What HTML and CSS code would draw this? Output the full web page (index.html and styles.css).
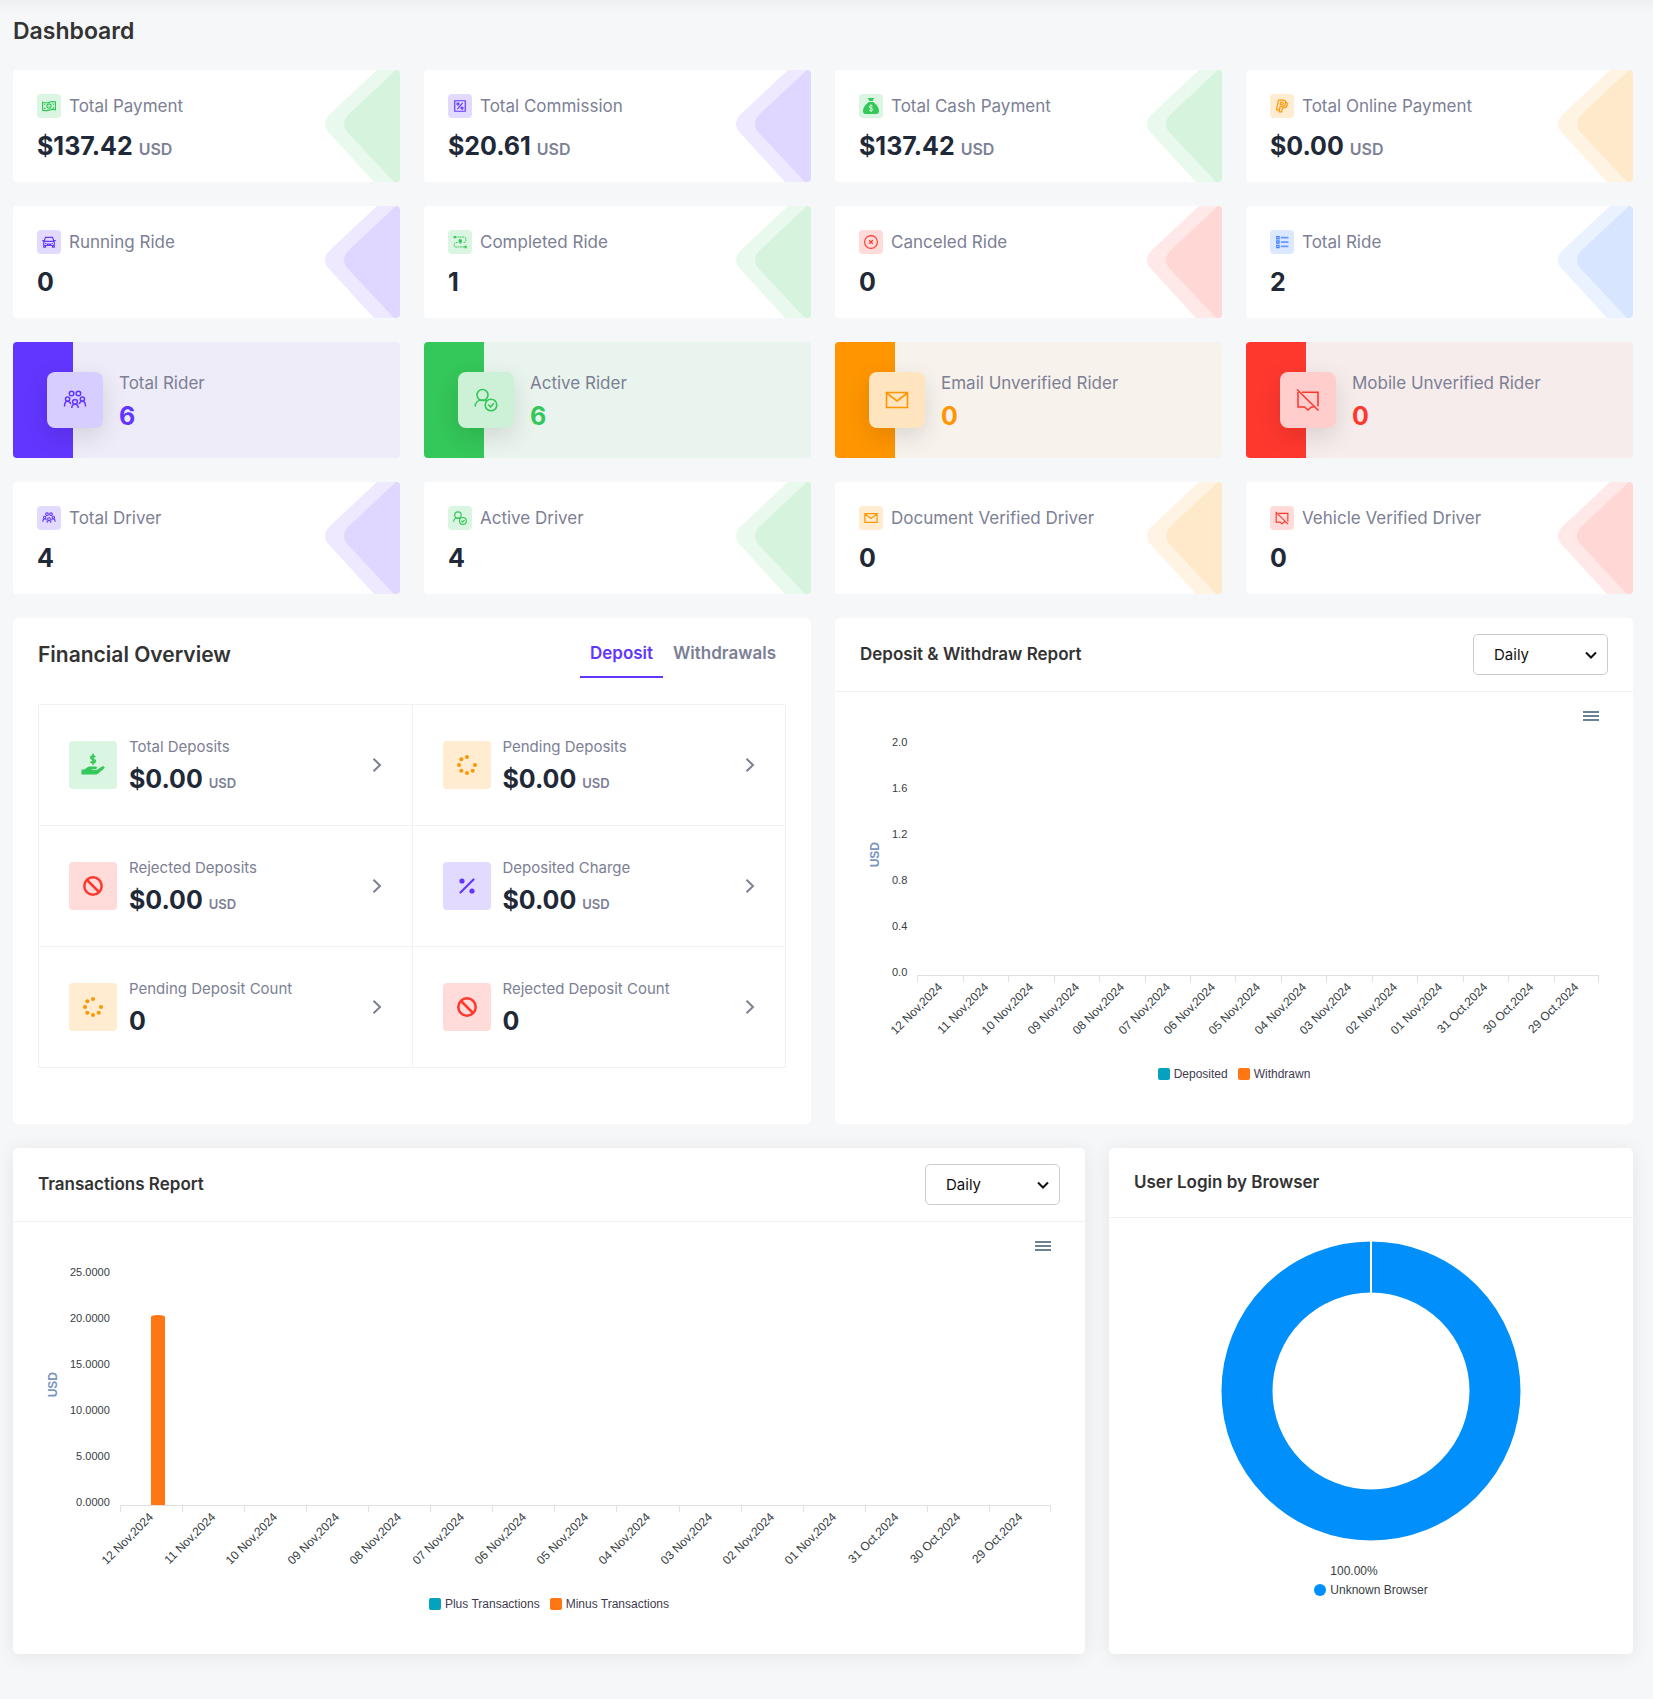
FILE: index.html
```html
<!DOCTYPE html>
<html lang="en">
<head>
<meta charset="utf-8">
<meta name="viewport" content="width=device-width, initial-scale=1">
<title>Dashboard</title>
<link rel="stylesheet" href="styles.css">
</head>
<body>
<svg class="sprite" aria-hidden="true">
  <symbol id="i-wedge" viewBox="0 0 75 112"><path opacity=".11" d="M52 0 6 43Q-6 54 6 65L49 112H75V0Z"/><path opacity=".1" d="M71 0 25 43Q13 54 25 65L69 112H75V0Z"/></symbol>
  <symbol id="i-cash" viewBox="0 0 24 24"><g fill="none" stroke="currentColor" stroke-width="2"><path d="M1 5.500c4 1.600 7 1.200 11 0s7-1.600 11-.5v13.500c-4-1.200-7-.7-11 .5s-7 1.200-11 0z"/><circle cx="12" cy="12" r="3.600"/></g><path fill="currentColor" d="M3.500 8h3.500L3.500 11zM17 7.500h3.500V11zM3.500 13.500 7 17H3.500zM20.500 13v3.500H17z"/><circle cx="12" cy="12" r="1" fill="currentColor"/></symbol>
  <symbol id="i-percent-box" viewBox="0 0 24 24"><g fill="none" stroke="currentColor" stroke-width="2"><path d="M3 3h18v18H3z"/><circle cx="8.500" cy="8.500" r="1.800"/><circle cx="15.500" cy="15.500" r="1.800"/><path d="M7.500 17.500l9-11"/></g></symbol>
  <symbol id="i-bag" viewBox="0 0 24 24"><path fill="currentColor" d="M7 0h10l-2.600 4.500H9.600zM8.500 6h7C20 9.500 24 14 24 20c0 2.500-1.500 4-4 4H4c-2.500 0-4-1.500-4-4C0 14 4 9.500 8.500 6z"/><path fill="none" stroke="#dbf5e2" stroke-width="1.500" d="M14.600 12.600c-.6-1-1.500-1.200-2.600-1.200-1.500 0-2.600.7-2.600 1.900 0 2.700 5.400 1.200 5.400 3.900 0 1.200-1.200 2-2.800 2-1.300 0-2.300-.4-2.800-1.400M12 9.500v11.500"/></symbol>
  <symbol id="i-paypal" viewBox="0 0 24 24"><g fill="none" stroke="currentColor" stroke-width="2" stroke-linejoin="round"><path d="M6 2h7.500c3.500 0 5.300 2 4.700 5-.6 3.600-3 5.500-6.700 5.500H8.800L7.600 18.500H2.500z"/><path d="M18.500 5c2.300 1 3 2.900 2.500 5.200-.7 3.500-3 5-6.500 5h-1.800L11.500 22H7l.8-3.500"/><path d="M9.500 5.500h3c1.300 0 2 .6 1.700 1.800-.3 1.500-1.300 2-2.700 2H8.700z"/></g></symbol>
  <symbol id="i-car" viewBox="0 0 24 24"><g fill="none" stroke="currentColor" stroke-width="2"><path d="M3 20V12l3-8h12l3 8v8M3 11h18M3 18h18M.5 9.500H4M20 9.500h3.500M3 17v4h3v-3M21 17v4h-3v-3"/><path d="M8.500 18l1-2.500h5l1 2.500"/></g><circle cx="6.500" cy="14.500" r="1.200" fill="currentColor"/><circle cx="17.500" cy="14.500" r="1.200" fill="currentColor"/></symbol>
  <symbol id="i-route" viewBox="0 0 24 24"><path fill="none" stroke="currentColor" stroke-width="1.600" stroke-dasharray="3 1" d="M4 3.500h15q3 0 3 3V10q0 3-3 3h-2M8 13H5q-3 0-3 3v1.500q0 3 3 3h15"/><path fill="currentColor" d="M1 1.500h4v4H1zM19.500 18.500h4v4h-4zM12.500 15.500C10.500 13 9.500 11.500 9.500 10a3 3 0 0 1 6 0c0 1.500-1 3-3 5.500z"/></symbol>
  <symbol id="i-x-circle" viewBox="0 0 24 24"><g fill="none" stroke="currentColor"><circle cx="12" cy="12" r="11" stroke-width="1.900"/><path stroke-width="2.200" d="M9 9l6 6M15 9l-6 6"/></g></symbol>
  <symbol id="i-list" viewBox="0 0 24 24"><g fill="none" stroke="currentColor"><path stroke-width="2" d="M3 2.500h4v4H3zM3 10h4v4H3zM3 17.500h4v4H3z"/><path stroke-width="3" opacity=".75" d="M10 4.500h13M10 12h13M10 19.500h13"/></g></symbol>
  <symbol id="i-users" viewBox="-1 0 26 26"><g fill="none" stroke="currentColor"><circle cx="8.300" cy="6" r="2.500"/><circle cx="15.700" cy="6" r="2.500"/><circle cx="4" cy="12" r="2.300"/><circle cx="20" cy="12" r="2.300"/><circle cx="12" cy="15" r="2.600"/><path d="M.6 20c0-3.400 1.400-5.700 3.400-5.700 1.600 0 2.900 1.200 3.400 3.200M23.400 20c0-3.400-1.400-5.700-3.400-5.700-1.600 0-2.900 1.200-3.400 3.200M8.500 21.800c0-2.700 1.400-4.200 3.500-4.200s3.500 1.500 3.500 4.200"/></g></symbol>
  <symbol id="i-user-check" viewBox="0 0 24 24"><g fill="none" stroke="currentColor"><circle cx="8.500" cy="7" r="5.500"/><path d="M1.200 18.500c0-4 3-6.500 6.800-6.500 2 0 3.500.5 4.700 1.400"/><circle cx="17" cy="17" r="5.800"/><path d="M14.300 16.500l2.300 2.500 3.200-3.800"/></g></symbol>
  <symbol id="i-mail" viewBox="0 0 24 24"><path fill="none" stroke="currentColor" d="M1.500 4.500h21v15h-21zM1.500 5 12 13 22.500 5"/></symbol>
  <symbol id="i-comment-slash" viewBox="0 0 24 24"><path fill="none" stroke="currentColor" d="M1 1.500 22.500 22.500M6 4.200h16v14M2 4v15h6.500L12 22l3.300-3h2.500"/></symbol>
  <symbol id="i-hand-dollar" viewBox="0 0 24 24"><path fill="currentColor" d="M.5 16.500h3l2.600-2.100c.9-.7 1.700-.9 2.700-.9h6c1.500 0 1.500 2.200 0 2.400h-4v.8h5.300L21 13.600c1.800-1.200 3.500.6 2.100 2l-5.600 4.700c-1 .8-1.800 1.200-3 1.200H.5z"/><path fill="none" stroke="currentColor" stroke-width="1.700" d="M14.200 4.200c-.5-.8-1.200-1-2.200-1-1.300 0-2.200.6-2.200 1.500 0 2.300 4.600 1 4.600 3.400 0 1-1 1.600-2.400 1.600-1.200 0-2-.4-2.400-1.200M12 .8v11"/></symbol>
  <symbol id="i-spinner" viewBox="0 0 20 20"><g fill="currentColor"><circle cx="10" cy="2" r="2"/><circle cx="4.300" cy="4.300" r="2"/><circle cx="2" cy="10" r="2"/><circle cx="4.300" cy="15.700" r="2"/><circle cx="10" cy="18" r="2"/><circle cx="15.700" cy="15.700" r="2"/><circle cx="18" cy="10" r="2"/></g></symbol>
  <symbol id="i-ban" viewBox="0 0 20 20"><g fill="none" stroke="currentColor" stroke-width="2.500"><circle cx="10" cy="10" r="8.700"/><path d="M4 4l12 12"/></g></symbol>
  <symbol id="i-percent" viewBox="0 0 20 20"><g fill="currentColor"><circle cx="5" cy="5" r="2.600"/><circle cx="15" cy="15" r="2.600"/></g><path stroke="currentColor" stroke-width="2.200" stroke-linecap="round" d="M3.500 16.500l13-13"/></symbol>
  <symbol id="i-chevron" viewBox="0 0 10 14"><path fill="none" stroke="currentColor" stroke-width="2" d="M1.500 .8 8 7l-6.500 6.200"/></symbol>
  <symbol id="i-menu" viewBox="0 0 16 12"><path fill="none" stroke="currentColor" stroke-width="2" d="M0 2h16M0 6h16M0 10h16"/></symbol>
</svg>

<main class="page">
  <h1 class="page-title">Dashboard</h1>

  <div class="grid">
    <article class="stat green"><div class="stat-head"><span class="badge"><svg><use href="#i-cash"/></svg></span><h2 class="label">Total Payment</h2></div><p class="value">$137.42 <small>USD</small></p><svg class="wedge"><use href="#i-wedge"/></svg></article>
    <article class="stat purple"><div class="stat-head"><span class="badge"><svg><use href="#i-percent-box"/></svg></span><h2 class="label">Total Commission</h2></div><p class="value">$20.61 <small>USD</small></p><svg class="wedge"><use href="#i-wedge"/></svg></article>
    <article class="stat green"><div class="stat-head"><span class="badge"><svg class="wide"><use href="#i-bag"/></svg></span><h2 class="label">Total Cash Payment</h2></div><p class="value">$137.42 <small>USD</small></p><svg class="wedge"><use href="#i-wedge"/></svg></article>
    <article class="stat orange"><div class="stat-head"><span class="badge"><svg><use href="#i-paypal"/></svg></span><h2 class="label">Total Online Payment</h2></div><p class="value">$0.00 <small>USD</small></p><svg class="wedge"><use href="#i-wedge"/></svg></article>

    <article class="stat purple"><div class="stat-head"><span class="badge"><svg><use href="#i-car"/></svg></span><h2 class="label">Running Ride</h2></div><p class="value">0</p><svg class="wedge"><use href="#i-wedge"/></svg></article>
    <article class="stat green"><div class="stat-head"><span class="badge"><svg><use href="#i-route"/></svg></span><h2 class="label">Completed Ride</h2></div><p class="value">1</p><svg class="wedge"><use href="#i-wedge"/></svg></article>
    <article class="stat red"><div class="stat-head"><span class="badge"><svg><use href="#i-x-circle"/></svg></span><h2 class="label">Canceled Ride</h2></div><p class="value">0</p><svg class="wedge"><use href="#i-wedge"/></svg></article>
    <article class="stat blue"><div class="stat-head"><span class="badge"><svg><use href="#i-list"/></svg></span><h2 class="label">Total Ride</h2></div><p class="value">2</p><svg class="wedge"><use href="#i-wedge"/></svg></article>

    <article class="rider purple"><span class="rider-icon"><svg><use href="#i-users"/></svg></span><div class="rider-text"><h2 class="label">Total Rider</h2><p class="value">6</p></div></article>
    <article class="rider green"><span class="rider-icon"><svg><use href="#i-user-check"/></svg></span><div class="rider-text"><h2 class="label">Active Rider</h2><p class="value">6</p></div></article>
    <article class="rider orange"><span class="rider-icon"><svg><use href="#i-mail"/></svg></span><div class="rider-text"><h2 class="label">Email Unverified Rider</h2><p class="value">0</p></div></article>
    <article class="rider red"><span class="rider-icon"><svg><use href="#i-comment-slash"/></svg></span><div class="rider-text"><h2 class="label">Mobile Unverified Rider</h2><p class="value">0</p></div></article>

    <article class="stat purple"><div class="stat-head"><span class="badge"><svg><use href="#i-users"/></svg></span><h2 class="label">Total Driver</h2></div><p class="value">4</p><svg class="wedge"><use href="#i-wedge"/></svg></article>
    <article class="stat green"><div class="stat-head"><span class="badge"><svg><use href="#i-user-check"/></svg></span><h2 class="label">Active Driver</h2></div><p class="value">4</p><svg class="wedge"><use href="#i-wedge"/></svg></article>
    <article class="stat orange"><div class="stat-head"><span class="badge"><svg><use href="#i-mail"/></svg></span><h2 class="label">Document Verified Driver</h2></div><p class="value">0</p><svg class="wedge"><use href="#i-wedge"/></svg></article>
    <article class="stat red"><div class="stat-head"><span class="badge"><svg><use href="#i-comment-slash"/></svg></span><h2 class="label">Vehicle Verified Driver</h2></div><p class="value">0</p><svg class="wedge"><use href="#i-wedge"/></svg></article>

    <section class="card half finance">
      <div class="finance-head">
        <h2 class="finance-title">Financial Overview</h2>
        <div class="tabs" role="tablist">
          <button type="button" class="tab active" role="tab" aria-selected="true">Deposit</button>
          <button type="button" class="tab" role="tab" aria-selected="false">Withdrawals</button>
        </div>
      </div>
      <div class="finance-grid">
        <a href="#" class="cell green"><span class="cell-icon"><svg class="wide"><use href="#i-hand-dollar"/></svg></span><span class="cell-text"><span class="cell-label">Total Deposits</span><span class="value">$0.00 <small>USD</small></span></span><svg class="chevron"><use href="#i-chevron"/></svg></a>
        <a href="#" class="cell orange"><span class="cell-icon"><svg><use href="#i-spinner"/></svg></span><span class="cell-text"><span class="cell-label">Pending Deposits</span><span class="value">$0.00 <small>USD</small></span></span><svg class="chevron"><use href="#i-chevron"/></svg></a>
        <a href="#" class="cell red"><span class="cell-icon"><svg><use href="#i-ban"/></svg></span><span class="cell-text"><span class="cell-label">Rejected Deposits</span><span class="value">$0.00 <small>USD</small></span></span><svg class="chevron"><use href="#i-chevron"/></svg></a>
        <a href="#" class="cell purple"><span class="cell-icon"><svg><use href="#i-percent"/></svg></span><span class="cell-text"><span class="cell-label">Deposited Charge</span><span class="value">$0.00 <small>USD</small></span></span><svg class="chevron"><use href="#i-chevron"/></svg></a>
        <a href="#" class="cell orange"><span class="cell-icon"><svg><use href="#i-spinner"/></svg></span><span class="cell-text"><span class="cell-label">Pending Deposit Count</span><span class="value">0</span></span><svg class="chevron"><use href="#i-chevron"/></svg></a>
        <a href="#" class="cell red"><span class="cell-icon"><svg><use href="#i-ban"/></svg></span><span class="cell-text"><span class="cell-label">Rejected Deposit Count</span><span class="value">0</span></span><svg class="chevron"><use href="#i-chevron"/></svg></a>
      </div>
    </section>

    <section class="card half">
      <header class="card-head">
        <h2 class="card-title">Deposit &amp; Withdraw Report</h2>
        <select class="select" aria-label="Deposit and withdraw period"><option>Daily</option><option>Weekly</option><option>Monthly</option></select>
      </header>
      <div class="toolbar"><button type="button" class="menu" aria-label="Chart menu"><svg><use href="#i-menu"/></svg></button></div>
      <div class="chart">
        <span class="axis-title">USD</span>
        <div class="y-axis"><span>2.0</span><span>1.6</span><span>1.2</span><span>0.8</span><span>0.4</span><span>0.0</span></div>
        <div class="plot"></div>
        <div class="x-axis"><span><i>12 Nov,2024</i></span><span><i>11 Nov,2024</i></span><span><i>10 Nov,2024</i></span><span><i>09 Nov,2024</i></span><span><i>08 Nov,2024</i></span><span><i>07 Nov,2024</i></span><span><i>06 Nov,2024</i></span><span><i>05 Nov,2024</i></span><span><i>04 Nov,2024</i></span><span><i>03 Nov,2024</i></span><span><i>02 Nov,2024</i></span><span><i>01 Nov,2024</i></span><span><i>31 Oct,2024</i></span><span><i>30 Oct,2024</i></span><span><i>29 Oct,2024</i></span></div>
      </div>
      <ul class="legend"><li><b class="swatch teal"></b>Deposited</li><li><b class="swatch amber"></b>Withdrawn</li></ul>
    </section>

    <section class="card raised two-thirds">
      <header class="card-head">
        <h2 class="card-title">Transactions Report</h2>
        <select class="select" aria-label="Transactions period"><option>Daily</option><option>Weekly</option><option>Monthly</option></select>
      </header>
      <div class="toolbar"><button type="button" class="menu" aria-label="Chart menu"><svg><use href="#i-menu"/></svg></button></div>
      <div class="chart">
        <span class="axis-title">USD</span>
        <div class="y-axis"><span>25.0000</span><span>20.0000</span><span>15.0000</span><span>10.0000</span><span>5.0000</span><span>0.0000</span></div>
        <div class="plot"><div class="slot"><div class="bar" style="height:82.44%"></div></div></div>
        <div class="x-axis"><span><i>12 Nov,2024</i></span><span><i>11 Nov,2024</i></span><span><i>10 Nov,2024</i></span><span><i>09 Nov,2024</i></span><span><i>08 Nov,2024</i></span><span><i>07 Nov,2024</i></span><span><i>06 Nov,2024</i></span><span><i>05 Nov,2024</i></span><span><i>04 Nov,2024</i></span><span><i>03 Nov,2024</i></span><span><i>02 Nov,2024</i></span><span><i>01 Nov,2024</i></span><span><i>31 Oct,2024</i></span><span><i>30 Oct,2024</i></span><span><i>29 Oct,2024</i></span></div>
      </div>
      <ul class="legend"><li><b class="swatch teal"></b>Plus Transactions</li><li><b class="swatch amber"></b>Minus Transactions</li></ul>
    </section>

    <section class="card raised third">
      <header class="card-head plain"><h2 class="card-title">User Login by Browser</h2></header>
      <div class="donut-body">
        <svg class="donut" viewBox="0 0 300 300" role="img" aria-label="Unknown Browser 100%"><circle cx="150" cy="150" r="124" fill="none" stroke="#008ffb" stroke-width="51"/><path d="M150 0v101" stroke="#fff" stroke-width="2"/></svg>
        <div class="donut-legend"><b class="dot"></b><span>100.00%<br>Unknown Browser</span></div>
      </div>
    </section>
  </div>
</main>
</body>
</html>
```
FILE: styles.css
```css
* { box-sizing: border-box; }

body {
  margin: 0;
  background: #f6f7f9 linear-gradient(#eff0f3, #f6f7f9) 0 0 / 100% 14px no-repeat;
  font-family: Inter, "Liberation Sans", sans-serif;
  color: #333;
}

h1, h2, p, ul { margin: 0; padding: 0; }
svg { display: block; }
.sprite { display: none; }

.green { --c: #34c759; --card: #eaf4ee; }
.purple { --c: #6236ff; --card: #eeecf8; }
.orange { --c: #ff9500; --card: #f7f2ec; }
.red { --c: #ff382e; --card: #f7ecec; }
.blue { --c: #3d7fff; }

.page { padding: 16px 20px 44px 13px; }
.page-title { margin-bottom: 24px; font-size: 23px; line-height: 30px; font-weight: 600; }

.grid {
  display: grid;
  grid-template-columns: repeat(12, minmax(0, 1fr));
  gap: 24px;
}

/* Stat cards */
.stat, .rider { position: relative; grid-column: span 3; border-radius: 4px; overflow: hidden; }
.stat { padding: 24px; background: #fff; }
.stat-head { display: flex; align-items: center; gap: 8px; margin-bottom: 16px; }
.badge {
  display: grid;
  place-items: center;
  width: 24px;
  height: 24px;
  border-radius: 4px;
  background: color-mix(in srgb, var(--c) 18%, #fff);
  color: var(--c);
}
.badge svg { width: 14px; height: 14px; stroke-width: 2; }
.badge .wide { width: 16px; height: 16px; }
.label { font-size: 17px; line-height: 22px; font-weight: 400; color: #7c8094; }
.value { font-size: 25px; line-height: 24px; font-weight: 700; color: #1f2937; }
.value small { font-size: 16px; line-height: 1; font-weight: 600; color: #7c8094; }
.wedge { position: absolute; top: 0; right: 0; width: 75px; height: 112px; fill: var(--c); }

/* Rider cards */
.rider {
  display: flex;
  align-items: center;
  gap: 16px;
  padding: 30px 34px;
  background: linear-gradient(90deg, var(--c) 60px, var(--card) 60px);
}
.rider-icon {
  display: grid;
  place-items: center;
  flex: none;
  width: 56px;
  height: 56px;
  border-radius: 8px;
  background: color-mix(in srgb, var(--c) 25%, #fff);
  color: var(--c);
  box-shadow: 0 8px 24px rgba(0, 0, 0, .12);
}
.rider-icon svg { width: 24px; height: 24px; stroke-width: 2; stroke-width: 1.600; }
.rider-text { display: grid; gap: 10px; }
.rider .value { color: var(--c); }

/* Panels */
.card { background: #fff; border-radius: 5px; }
.half { grid-column: span 6; }
.two-thirds { grid-column: span 8; }
.third { grid-column: span 4; }
.raised { box-shadow: 0 2px 20px rgba(0, 0, 0, .08); }

.card-head {
  display: flex;
  align-items: center;
  justify-content: space-between;
  padding: 16px 25px;
  border-bottom: 1px solid #f1f1f1;
}
.card-head.plain { padding: 24px 25px; }
.card-title { font-size: 17px; line-height: 21px; font-weight: 600; }
.select {
  appearance: none;
  width: 135px;
  height: 41px;
  padding: 0 20px;
  border: 1px solid #ccc;
  border-radius: 5px;
  background: #fff url("data:image/svg+xml,%3Csvg xmlns='http://www.w3.org/2000/svg' width='12' height='8'%3E%3Cpath d='M1 1.500l5 5 5-5' fill='none' stroke='%23111' stroke-width='2'/%3E%3C/svg%3E") right 10px center no-repeat;
  font: 400 15px Inter, sans-serif;
  color: #111;
}

/* Financial overview */
.finance { padding: 24px 25px; }
.finance-head { display: flex; justify-content: space-between; margin-bottom: 26px; }
.finance-title { font-size: 21px; line-height: 26px; font-weight: 600; }
.tabs { display: flex; }
.tab {
  padding: 0 10px 12px;
  border: 0;
  border-bottom: 2px solid transparent;
  background: none;
  font: 600 17px/22px Inter, sans-serif;
  color: #7c8094;
}
.tab.active { border-color: #6236ff; color: #6236ff; }
.finance-grid {
  display: grid;
  grid-template-columns: 1fr 1fr;
  border: solid #f1f1f1;
  border-width: 0 1px 1px 0;
}
.cell {
  display: flex;
  align-items: center;
  gap: 12px;
  padding: 36px 30px;
  border: solid #f1f1f1;
  border-width: 1px 0 0 1px;
  text-decoration: none;
}
.cell-icon {
  display: grid;
  place-items: center;
  width: 48px;
  height: 48px;
  border-radius: 4px;
  background: color-mix(in srgb, var(--c) 18%, #fff);
  color: var(--c);
}
.cell-icon svg { width: 20px; height: 20px; }
.cell-icon .wide { width: 24px; height: 24px; }
.cell-text { display: grid; gap: 12px; flex: 1; margin-block: -4px; }
.cell-label { font-size: 15px; line-height: 16px; color: #7c8094; }
.cell .value small { font-size: 13px; }
.chevron { width: 10px; height: 14px; color: #7c8094; }

/* Charts */
.toolbar { display: flex; justify-content: flex-end; padding: 18px 34px 0; }
.menu { padding: 0; border: 0; background: none; color: #6e8192; }
.menu svg { width: 16px; height: 12px; }
.chart {
  display: grid;
  grid-template: 230px 91px / 14px auto 1fr;
  column-gap: 10px;
  padding: 23px 34px 0 33px;
  font: 12px "Liberation Sans", Arial, sans-serif;
  color: #373d3f;
}
.axis-title {
  align-self: center;
  margin-bottom: 10px;
  writing-mode: vertical-rl;
  transform: rotate(180deg);
  line-height: 14px;
  font-weight: 700;
  color: #7996c0;
}
.y-axis {
  display: flex;
  flex-direction: column;
  justify-content: space-between;
  margin: -11px 0 -5px;
  font-size: 11px;
  line-height: 16px;
  text-align: right;
}
.plot, .x-axis { display: grid; grid-template-columns: repeat(15, 1fr); }
.x-axis { grid-column: 3; border-top: 1px solid #e0e0e0; }
.x-axis span { position: relative; height: 6px; border-left: 1px solid #e0e0e0; }
.x-axis span:last-child { border-right: 1px solid #e0e0e0; }
.x-axis i {
  position: absolute;
  top: 2px;
  right: 50%;
  font-style: normal;
  line-height: 14px;
  white-space: nowrap;
  transform: rotate(-45deg);
  transform-origin: 100% 50%;
}
.slot { display: flex; align-items: flex-end; padding-left: 50%; }
.bar { width: 14px; border-radius: 7px 7px 0 0 / 2px 2px 0 0; background: #ff7614; }
.legend {
  display: flex;
  justify-content: center;
  gap: 10px;
  padding-bottom: 42px;
  list-style: none;
  font: 12px/16px "Liberation Sans", Arial, sans-serif;
  color: #3f3b4f;
}
.legend li { display: flex; align-items: center; gap: 4px; }
.swatch { width: 12px; height: 12px; border-radius: 2px; }
.teal { background: #05a2bf; }
.amber { background: #ff7614; }

.donut-body { display: flex; flex-direction: column; align-items: center; padding: 23px 24px; }
.donut { width: 300px; max-width: 100%; }
.donut-legend {
  display: flex;
  align-items: flex-end;
  gap: 4px;
  margin-top: 21px;
  font: 12px/19px "Liberation Sans", Arial, sans-serif;
  color: #373d3f;
}
.dot { width: 12px; height: 12px; margin-bottom: 4px; border-radius: 50%; background: #008ffb; }
```
